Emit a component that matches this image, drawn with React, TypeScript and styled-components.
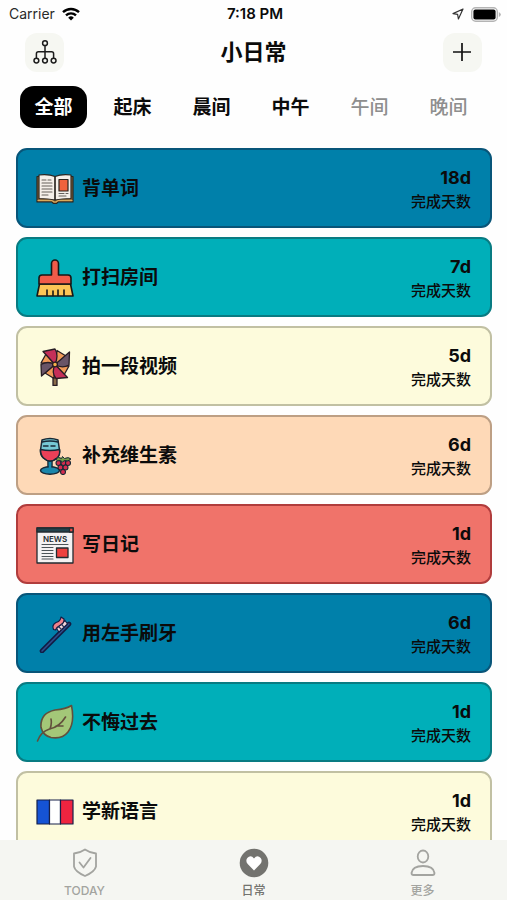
import React, { useState } from 'react';
import styled, { createGlobalStyle } from 'styled-components';

const GlobalStyle = createGlobalStyle`
  * { box-sizing: border-box; }
  body {
    margin: 0;
    background: #fefefe;
    color: #0b0b0b;
    font-family: Inter, "Noto Sans CJK SC", sans-serif;
  }
  button { font: inherit; color: inherit; border: 0; padding: 0; background: none; cursor: pointer; }
  h1, p, ul { margin: 0; padding: 0; }
  svg { display: block; flex: none; }
`;

const Screen = styled.div`
  display: flex;
  flex-direction: column;
  height: 100vh;
  overflow: hidden;
`;

const StatusBar = styled.div`
  display: grid;
  grid-template-columns: 1fr auto 1fr;
  align-items: center;
  flex: none;
  height: 28px;
  padding: 0 6px 0 9px;
  font-size: 14px;
  line-height: 20px;
`;

const StatusGroup = styled.div<{ $end?: boolean }>`
  display: flex;
  align-items: center;
  gap: 7px;
  color: #2a2a2a;
  justify-content: ${(p) => (p.$end ? 'flex-end' : 'flex-start')};
`;

const Clock = styled.time`
  font-size: 15px;
  font-weight: 600;
`;

const Header = styled.header`
  display: flex;
  align-items: center;
  justify-content: space-between;
  flex: none;
  height: 48px;
  padding: 0 25px;
`;

const Title = styled.h1`
  font-size: 22px;
  line-height: 32px;
  font-weight: 600;
`;

const IconButton = styled.button`
  display: grid;
  place-items: center;
  width: 39px;
  height: 39px;
  border-radius: 12px;
  background: #f6f7f2;
`;

const Tabs = styled.nav`
  display: flex;
  flex: none;
  gap: 12px;
  padding: 10px 20px 0;
  overflow-x: auto;
  scrollbar-width: none;
`;

const Tab = styled.button<{ $active: boolean; $muted?: boolean }>`
  && {
    flex: none;
    width: 67px;
    height: 42px;
    padding-top: 2px;
    border-radius: 14px;
    font-size: 19px;
    line-height: 26px;
    font-weight: ${(p) => (p.$muted ? 500 : 600)};
    background: ${(p) => (p.$active ? '#000' : 'transparent')};
    color: ${(p) => (p.$active ? '#fff' : p.$muted ? '#8e8e8e' : '#0b0b0b')};
  }
`;

const HabitList = styled.ul`
  display: flex;
  flex-direction: column;
  gap: 9px;
  flex: 1;
  min-height: 0;
  margin-top: 20px;
  padding: 0 15px 0 16px;
  overflow-y: auto;
  scrollbar-width: none;
  list-style: none;
`;

const HabitCard = styled.li<{ $fill: string; $edge: string }>`
  display: flex;
  align-items: center;
  flex: none;
  height: 80px;
  padding: 2px 19px 0 18px;
  border: 2px solid ${(p) => p.$edge};
  border-radius: 11px;
  background: ${(p) => p.$fill};
`;

const HabitName = styled.p`
  flex: 1;
  margin-left: 8px;
  font-size: 19px;
  line-height: 26px;
  font-weight: 600;
`;

const Stats = styled.div`
  padding-top: 2px;
  text-align: right;
`;

const Days = styled.p`
  font-size: 18px;
  line-height: 24px;
  font-weight: 700;
`;

const Caption = styled.p`
  font-size: 15px;
  line-height: 24px;
  font-weight: 500;
`;

const BottomBar = styled.nav`
  display: grid;
  grid-template-columns: repeat(3, 1fr);
  flex: none;
  height: 60px;
  background: #f5f6f2;
`;

const BottomItem = styled.button<{ $active: boolean }>`
  && {
    display: flex;
    flex-direction: column;
    align-items: center;
    gap: 5px;
    padding-top: 8px;
    font-size: 12px;
    line-height: 16px;
    font-weight: 500;
    color: ${(p) => (p.$active ? '#73736f' : '#a3a4a0')};
  }
`;

const Wifi = () => (
  <svg width="18" height="14" viewBox="0 0 18 14" fill="none" stroke="#000" strokeWidth="2.4">
    <path d="M1 5.2a11.5 11.5 0 0 1 16 0" />
    <path d="M4 8.4a7.2 7.2 0 0 1 10 0" />
    <path d="M9 13.5 6.2 10.7a4 4 0 0 1 5.6 0z" fill="#000" stroke="none" />
  </svg>
);

const LocationArrow = () => (
  <svg width="12" height="12" viewBox="0 0 12 12" fill="none" stroke="#333" strokeWidth="1.2" strokeLinejoin="round">
    <path d="M11 1 1 5.6l4.6.8.8 4.6z" />
  </svg>
);

const Battery = () => (
  <svg width="30" height="15" viewBox="0 0 30 15">
    <rect x="0.7" y="0.7" width="25.6" height="13.6" rx="4" fill="#fff" stroke="#b4b4b4" strokeWidth="1.4" />
    <rect x="2.4" y="2.4" width="22.2" height="10.2" rx="2" fill="#000" />
    <path d="M27.8 5v5q2-1 2-2.5t-2-2.5z" fill="#b4b4b4" />
  </svg>
);

const TreeIcon = () => (
  <svg width="24" height="24" viewBox="0 0 24 24" fill="none" stroke="#1c1c1c" strokeWidth="1.5">
    <circle cx="12" cy="3.2" r="2.4" />
    <circle cx="3.4" cy="20.6" r="2.4" />
    <circle cx="12" cy="20.6" r="2.4" />
    <circle cx="20.6" cy="20.6" r="2.4" />
    <path d="M12 5.6v12.6M3.4 18.2v-4.400q0-2 2-2h13.200q2 0 2 2v4.400" />
  </svg>
);

const PlusIcon = () => (
  <svg width="20" height="20" viewBox="0 0 20 20" stroke="#111" strokeWidth="1.7">
    <path d="M10 1v18M1 10h18" />
  </svg>
);

const Art = styled.svg.attrs({ width: 38, height: 38, viewBox: '0 0 38 38', fill: 'none', 'aria-hidden': true })`
  stroke-linejoin: round;
  stroke-linecap: round;
`;

const BookArt = () => (
  <Art stroke="#2b2520" strokeWidth="1.2">
    <path d="M1 6.500h36v25.500H22l-1.500 1.500h-3L16 32H1z" fill="#8c6a3c" />
    <path d="M2 30.500h14l2 1.500h2l2-1.500h14" stroke="#d9a95b" />
    <path d="M3 5q10-1 16 1.500V30q-7-1.500-16-1.500zM35 5q-10-1-16 1.500V30q7-1.500 16-1.500z" fill="#f5efe9" />
    <path d="M6 10h4M12 10h3M6 13h10M6 16h10M6 19h10M6 22h10M6 25h6M23 23.500h5M30 23.500h2M23 26h7" stroke="#66605b" strokeWidth="1.1" />
    <path d="M23 9.500h9V21h-9z" fill="#f0623c" />
    <path d="M19 7v23" />
  </Art>
);

const BroomArt = () => (
  <Art stroke="#171717" strokeWidth="1.6">
    <path d="M3.5 25h31L37 37H1z" fill="#fbc556" />
    <path d="M15.5 16V4.500a3.500 3.500 0 0 1 7 0V16H32q3 0 3 3v6H3v-6q0-3 3-3z" fill="#ef5b49" />
    <path d="M11 31v5.500M17 32v4.500M22 31v5.500M28 31v5.500" />
  </Art>
);

const PinwheelArt = () => (
  <Art stroke="#281d24" strokeWidth="1.3">
    <path d="M17 22h4v15.500h-4z" fill="#8b6c4a" />
    <path d="M19 16.500 21 2.500l9 5.500zM19 16.500 33 18l-5 9zM19 16.500 18 30.500 9 25zM19 16.500 5 15l5-9z" fill="#f09a58" />
    <path d="M7 3.500 19 1q4 6 0 15.500z" fill="#c52f59" />
    <path d="M33.500 4 33 17q-7 4-14-.5z" fill="#695467" />
    <path d="M31.500 29.500 20 30.500q-5-6-1-14z" fill="#c52f59" />
    <path d="M5.500 28 5 16.500q7-4 14 0z" fill="#695467" />
    <circle cx="19" cy="16.500" r="2.400" fill="#f6b14b" />
  </Art>
);

const WineArt = () => (
  <Art stroke="#182936" strokeWidth="1.5">
    <path d="M12 23h4v10h-4z" fill="#1689ad" />
    <ellipse cx="14" cy="33.500" rx="9.500" ry="3.700" fill="#1b86ab" />
    <path d="M12.800 24h2.400v10h-2.400z" fill="#1689ad" stroke="none" />
    <path d="M6 3 4.500 13q-.5 5 3 8t6.500 3q4 0 7-3t2.500-8L22 3q-8-3-16 0z" fill="#76c9d4" />
    <path d="M4.500 12.500q9.500 2 19 0 1 5.500-2.500 8.500t-7 3q-3.500 0-6.500-3t-3-8.500z" fill="#ec4058" />
    <path d="M6 5q8-2 16 0M7.500 9H12M15 9h4" />
    <g fill="#d52d4f" strokeWidth="1.1">
      <circle cx="22.500" cy="26" r="2.500" /><circle cx="27.500" cy="26" r="2.500" /><circle cx="32" cy="26" r="2.500" />
      <circle cx="24.500" cy="30.500" r="2.500" /><circle cx="29.500" cy="30.500" r="2.500" /><circle cx="27" cy="35" r="2.500" />
    </g>
    <path d="M19.500 22q3-3 6-.5l1-2 2 2q4-2 6.500.500-3 3-6.500 1.500-2 3-4 0-3 1.500-5-1.500z" fill="#769d47" strokeWidth="1" />
  </Art>
);

const NewsArt = () => (
  <Art stroke="#222b30" strokeWidth="1.3">
    <path d="M1 2h36v35H1z" fill="#f4f1f2" />
    <path d="M1 2h36v4H1z" fill="#23424c" />
    <path d="M33.500 2H37v4h-3.500z" fill="#e84a46" />
    <text x="19" y="15.500" textAnchor="middle" fill="#222b30" stroke="none" fontFamily="Inter, sans-serif" fontSize="8" fontWeight="600">NEWS</text>
    <path d="M6 18.500h26M6 21.500h11M6 24.500h11M6 27.500h11M6 30.500h11M6 33h11" stroke="#4c5357" strokeWidth="1.1" />
    <path d="M20.500 22H32v9.500H20.500z" fill="#ef413f" />
  </Art>
);

const BrushArt = () => (
  <Art stroke="#121c44" strokeWidth="1.2">
    <path d="M6 36 33 9" strokeWidth="4.600" />
    <path d="M6 36 33 9" stroke="#2f4f8c" strokeWidth="1.600" />
    <path d="m20.500 13.500 2.500 3.500 8.500-8-2.500-3.500z" fill="#f2d7dc" />
    <path d="M17.500 14.500q-2-4.500 2.500-7 4.500-1 5-5.500l3 2q.5 4-3.500 6t-5 5z" fill="#f2828c" />
    <path d="m23 12 2.500 2.500m0-5L28 12" stroke="#293459" />
  </Art>
);

const LeafArt = () => (
  <Art stroke="#624f3c" strokeWidth="1.6">
    <path d="M35.500 1.500Q39 19 32 28q-6 7.500-17 5.500-8-2-10-10Q4 9 19 6q11-1 16.500-4.500z" fill="#a3c778" />
    <path d="M1.500 37q3-9 12-12 10-2 16-12M14 25q2-5 1-10M20 22q5 0 7 0" />
  </Art>
);

const FlagArt = () => (
  <Art stroke="#17204a" strokeWidth="1.2">
    <path d="M1 7h12.500v24H1z" fill="#1553d5" />
    <path d="M13.500 7h11v24h-11z" fill="#fff" />
    <path d="M24.500 7H37v24H24.500z" fill="#ef2440" />
  </Art>
);

const ShieldIcon = () => (
  <svg width="28" height="30" viewBox="0 0 28 30" fill="none" stroke="currentColor" strokeWidth="1.8" strokeLinejoin="round" strokeLinecap="round">
    <path d="M14 1.500q5 3.500 11 4v13q-1 5-11 9.500-10-4.500-11-9.500v-13q6-.5 11-4z" />
    <path d="m8.500 14.500 4 5 7-9.500" />
  </svg>
);

const HeartIcon = () => (
  <svg width="30" height="30" viewBox="0 0 30 30">
    <circle cx="15" cy="15" r="14.300" fill="currentColor" />
    <path d="M15 22.500 8.700 16q-2.500-3-.4-6 3.500-3.500 6.700.5 3.200-4 6.700-.5 2.100 3-.4 6z" fill="#fff" />
  </svg>
);

const PersonIcon = () => (
  <svg width="28" height="30" viewBox="0 0 28 30" fill="none" stroke="currentColor" strokeWidth="1.8">
    <ellipse cx="14" cy="8.500" rx="5.300" ry="6" />
    <path d="M4.500 27q-2 0-2-2 1-7 11.500-7t11.500 7q0 2-2 2z" />
  </svg>
);

const palette = {
  blue: { fill: '#0080aa', edge: '#085579' },
  teal: { fill: '#00afb9', edge: '#087b82' },
  cream: { fill: '#fdfbdc', edge: '#c1c0a3' },
  peach: { fill: '#fed9b7', edge: '#bd9f84' },
  coral: { fill: '#f0736a', edge: '#b03c3c' },
};

const habits: { name: string; days: number; tone: keyof typeof palette; Icon: React.FC }[] = [
  { name: '背单词', days: 18, tone: 'blue', Icon: BookArt },
  { name: '打扫房间', days: 7, tone: 'teal', Icon: BroomArt },
  { name: '拍一段视频', days: 5, tone: 'cream', Icon: PinwheelArt },
  { name: '补充维生素', days: 6, tone: 'peach', Icon: WineArt },
  { name: '写日记', days: 1, tone: 'coral', Icon: NewsArt },
  { name: '用左手刷牙', days: 6, tone: 'blue', Icon: BrushArt },
  { name: '不悔过去', days: 1, tone: 'teal', Icon: LeafArt },
  { name: '学新语言', days: 1, tone: 'cream', Icon: FlagArt },
];

const periods = [
  { label: '全部' },
  { label: '起床' },
  { label: '晨间' },
  { label: '中午' },
  { label: '午间', muted: true },
  { label: '晚间', muted: true },
];

const sections = [
  { label: 'TODAY', Icon: ShieldIcon },
  { label: '日常', Icon: HeartIcon },
  { label: '更多', Icon: PersonIcon },
];

export default function App() {
  const [period, setPeriod] = useState('全部');
  const [section, setSection] = useState('日常');

  return (
    <Screen lang="zh-CN">
      <GlobalStyle />
      <StatusBar>
        <StatusGroup>Carrier <Wifi /></StatusGroup>
        <Clock>7:18 PM</Clock>
        <StatusGroup $end><LocationArrow /><Battery /></StatusGroup>
      </StatusBar>
      <Header>
        <IconButton aria-label="分类"><TreeIcon /></IconButton>
        <Title>小日常</Title>
        <IconButton aria-label="添加"><PlusIcon /></IconButton>
      </Header>
      <Tabs>
        {periods.map((p) => (
          <Tab key={p.label} $active={p.label === period} $muted={p.muted} onClick={() => setPeriod(p.label)}>
            {p.label}
          </Tab>
        ))}
      </Tabs>
      <HabitList>
        {habits.map(({ name, days, tone, Icon }) => (
          <HabitCard key={name} $fill={palette[tone].fill} $edge={palette[tone].edge}>
            <Icon />
            <HabitName>{name}</HabitName>
            <Stats>
              <Days>{days}d</Days>
              <Caption>完成天数</Caption>
            </Stats>
          </HabitCard>
        ))}
      </HabitList>
      <BottomBar>
        {sections.map(({ label, Icon }) => (
          <BottomItem key={label} $active={label === section} onClick={() => setSection(label)}>
            <Icon />
            {label}
          </BottomItem>
        ))}
      </BottomBar>
    </Screen>
  );
}
